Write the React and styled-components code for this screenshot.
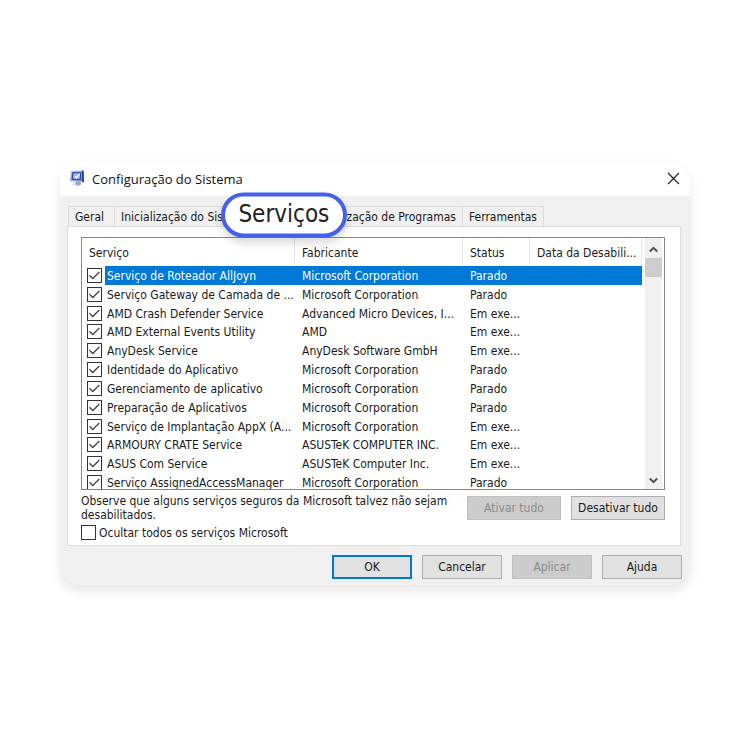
import React, { useState } from "react";
import styled, { createGlobalStyle, css } from "styled-components";

const GlobalStyle = createGlobalStyle`
  * { box-sizing: border-box; }
  body {
    margin: 0;
    background: #fff;
    color: #1a1a1a;
    font-family: "DejaVu Sans Condensed", "Noto Sans", sans-serif;
    font-size: 12px;
    line-height: 14px;
  }
  button, input { font: inherit; color: inherit; margin: 0; }
`;

const Page = styled.main`
  padding: 162px 60px 40px;
`;

const Dialog = styled.section`
  border-radius: 20px;
  background: #f0f0f0;
  box-shadow: 0 6px 12px rgba(0, 0, 0, 0.1);
`;

const TitleBar = styled.header`
  display: flex;
  align-items: center;
  height: 34px;
  padding: 0 10px 2px 9px;
  border-radius: 20px 20px 0 0;
  background: #fff;
`;

const Title = styled.h1`
  flex: 1;
  margin: 2px 0 0 7px;
  font: 400 13px/18px "Open Sans", "Noto Sans", sans-serif;
  color: #111;
`;

const CloseButton = styled.button`
  display: flex;
  padding: 0;
  border: 0;
  background: none;
`;

const Body = styled.div`
  padding: 10px 8px 6px 7px;
`;

const TabList = styled.div`
  display: flex;
  height: 20px;
  padding-left: 1px;
`;

const Tab = styled.button`
  position: relative;
  padding: 1px 6px 0;
  border: 1px solid #dcdcdc;
  border-width: 1px 1px 0 0;
  background: #f0f0f0;
  white-space: nowrap;
  &:first-child { border-left-width: 1px; padding-right: 10px; }
  ${(p) => p.$active && css`
    width: 48px;
    padding: 0;
    background: #fff;
  `}
`;

const Highlight = styled.span`
  position: absolute;
  z-index: 1;
  top: 8px;
  left: 26px;
  display: flex;
  align-items: center;
  justify-content: center;
  width: 126px;
  height: 45px;
  padding-bottom: 4px;
  transform: translate(-50%, -50%);
  border: 4px solid #4361ee;
  border-radius: 23px;
  background: #fff;
  box-shadow: 0 5px 10px rgba(0, 0, 0, 0.16);
  font-size: 24px;
  line-height: 28px;
  color: #222;
`;

const Panel = styled.div`
  margin-right: 1px;
  padding: 10px 15px 5px 13px;
  border: 1px solid #dcdcdc;
  background: #fff;
`;

const ListBox = styled.div`
  display: flex;
  height: 253px;
  overflow: hidden;
  border: 1px solid #828790;
  background: #fff;
`;

const ServiceTable = styled.table`
  flex: 1;
  width: 0;
  height: 254px;
  table-layout: fixed;
  border-collapse: separate;
  border-spacing: 0;
`;

const Column = styled.col`
  width: ${(p) => p.$width || "auto"};
`;

const HeadCell = styled.th`
  height: 28px;
  padding: 2px 0 0 7px;
  border-right: 1px solid #e5e5e5;
  font-weight: 400;
  text-align: left;
  white-space: nowrap;
`;

const Row = styled.tr`
  ${(p) => p.$selected && css`
    color: #fff;
    td:not(:first-child) { background: #0078d7; }
  `}
`;

const Cell = styled.td`
  padding: 1px 0 0 ${(p) => p.$indent || "7px"};
  white-space: nowrap;
  overflow: hidden;
`;

const TickCell = styled.td`
  padding: 0 0 0 5px;
`;

const TickBox = styled.input`
  appearance: none;
  display: block;
  flex: none;
  width: 15px;
  height: 15px;
  border: 1px solid #333;
  background: #fff;
  &:checked {
    background: #fff url("data:image/svg+xml,%3Csvg xmlns='http://www.w3.org/2000/svg' viewBox='0 0 13 13'%3E%3Cpath d='M1.500 6.300 4.800 9.500 11.300 3' fill='none' stroke='%23444' stroke-width='1.300'/%3E%3C/svg%3E");
  }
`;

const ScrollBar = styled.div`
  display: flex;
  flex-direction: column;
  align-items: center;
  width: 17px;
  margin: 0 2px 0 3px;
  background: #f0f0f0;
`;

const ScrollButton = styled.button`
  display: flex;
  align-items: center;
  justify-content: center;
  width: 17px;
  height: 20px;
  padding: 2px 0 0;
  border: 0;
  background: none;
`;

const Thumb = styled.div`
  width: 17px;
  height: 19px;
  margin-bottom: auto;
  background: #cdcdcd;
`;

const Footer = styled.div`
  display: flex;
  gap: 10px;
  padding-top: 4px;
`;

const Note = styled.p`
  flex: 1;
  margin: 0;
`;

const PushButton = styled.button`
  width: ${(p) => p.$width || "80px"};
  height: 24px;
  padding: 0;
  border: 1px solid #adadad;
  background: #e1e1e1;
  white-space: nowrap;
  ${(p) => p.$primary && css`border: 2px solid #0078d7;`}
  &:disabled { border-color: #bfbfbf; background: #ccc; color: #8b8b8b; }
`;

const FooterButtons = styled.div`
  display: flex;
  gap: 10px;
  padding-top: 2px;
`;

const HideOption = styled.label`
  display: flex;
  align-items: center;
  gap: 3px;
  margin-top: 3px;
`;

const Actions = styled.div`
  display: flex;
  justify-content: flex-end;
  gap: 10px;
  padding-top: 9px;
`;

const services = [
  ["Serviço de Roteador AllJoyn", "Microsoft Corporation", "Parado"],
  ["Serviço Gateway de Camada de ...", "Microsoft Corporation", "Parado"],
  ["AMD Crash Defender Service", "Advanced Micro Devices, I...", "Em exe..."],
  ["AMD External Events Utility", "AMD", "Em exe..."],
  ["AnyDesk Service", "AnyDesk Software GmbH", "Em exe..."],
  ["Identidade do Aplicativo", "Microsoft Corporation", "Parado"],
  ["Gerenciamento de aplicativo", "Microsoft Corporation", "Parado"],
  ["Preparação de Aplicativos", "Microsoft Corporation", "Parado"],
  ["Serviço de Implantação AppX (A...", "Microsoft Corporation", "Em exe..."],
  ["ARMOURY CRATE Service", "ASUSTeK COMPUTER INC.", "Em exe..."],
  ["ASUS Com Service", "ASUSTeK Computer Inc.", "Em exe..."],
  ["Serviço AssignedAccessManager", "Microsoft Corporation", "Parado"],
];

const MonitorIcon = () => (
  <svg width="16" height="17" viewBox="0 0 16 17" aria-hidden="true">
    <path d="M3 14 8 12.500l5 1.500-4 2.500z" fill="#cdd3dc" />
    <path d="M7 11h4.500l.5 3.500-2.500.8L6.500 14z" fill="#9aa5b8" />
    <path d="M2 1 14 .5l1 11.500L1 11.500z" fill="#a9b7dd" />
    <path d="M12.800.5 14.800 1 15 12.500l-2.200-.6z" fill="#34458c" />
    <path d="M3.200 2.200 12.300 2l-.1 8.400-9.700-.3z" fill="#2f4fb8" />
    <path d="M4.500 3.500 11 3.300l-.3 5.700-6.700-.2z" fill="#9db9f3" />
    <path d="m6 6 1.500 1.700L10.500 4" fill="none" stroke="#fff" strokeWidth="1.200" />
  </svg>
);

const Chevron = ({ down }) => (
  <svg width="9" height="7" viewBox="0 0 9 7" aria-hidden="true">
    <path d={down ? "M.8 1.500 4.500 5.200 8.200 1.500" : "M.8 5.500 4.500 1.800 8.200 5.500"} fill="none" stroke="#505050" strokeWidth="2" />
  </svg>
);

export default function App() {
  const [checked, setChecked] = useState(() => services.map(() => true));
  const [hidden, setHidden] = useState(false);
  const toggle = (i) => setChecked(checked.map((v, n) => (n === i ? !v : v)));

  return (
    <Page>
      <GlobalStyle />
      <Dialog role="dialog" aria-labelledby="title">
        <TitleBar>
          <MonitorIcon />
          <Title id="title">Configuração do Sistema</Title>
          <CloseButton aria-label="Fechar">
            <svg width="13" height="13" viewBox="0 0 13 13" aria-hidden="true">
              <path d="m1 1 11 11M12 1 1 12" stroke="#222" strokeWidth="1.200" />
            </svg>
          </CloseButton>
        </TitleBar>
        <Body>
          <TabList role="tablist">
            <Tab role="tab">Geral</Tab>
            <Tab role="tab">Inicialização do Sistema</Tab>
            <Tab role="tab" $active aria-selected="true">
              <Highlight>Serviços</Highlight>
            </Tab>
            <Tab role="tab">Inicialização de Programas</Tab>
            <Tab role="tab">Ferramentas</Tab>
          </TabList>
          <Panel role="tabpanel">
            <ListBox>
              <ServiceTable>
                <colgroup>
                  <Column $width="23px" />
                  <Column />
                  <Column $width="168px" />
                  <Column $width="67px" />
                  <Column $width="112px" />
                </colgroup>
                <thead>
                  <tr>
                    <HeadCell colSpan={2}>Serviço</HeadCell>
                    <HeadCell>Fabricante</HeadCell>
                    <HeadCell>Status</HeadCell>
                    <HeadCell>Data da Desabili...</HeadCell>
                  </tr>
                </thead>
                <tbody>
                  {services.map(([name, vendor, status], i) => (
                    <Row key={name} $selected={i === 0}>
                      <TickCell>
                        <TickBox type="checkbox" aria-label={name} checked={checked[i]} onChange={() => toggle(i)} />
                      </TickCell>
                      <Cell $indent="2px">{name}</Cell>
                      <Cell>{vendor}</Cell>
                      <Cell>{status}</Cell>
                      <Cell />
                    </Row>
                  ))}
                </tbody>
              </ServiceTable>
              <ScrollBar>
                <ScrollButton aria-label="Rolar para cima"><Chevron /></ScrollButton>
                <Thumb />
                <ScrollButton aria-label="Rolar para baixo"><Chevron down /></ScrollButton>
              </ScrollBar>
            </ListBox>
            <Footer>
              <Note>
                Observe que alguns serviços seguros da Microsoft talvez não sejam desabilitados.
              </Note>
              <FooterButtons>
                <PushButton $width="94px" disabled>Ativar tudo</PushButton>
                <PushButton $width="94px">Desativar tudo</PushButton>
              </FooterButtons>
            </Footer>
            <HideOption>
              <TickBox type="checkbox" checked={hidden} onChange={() => setHidden(!hidden)} />
              Ocultar todos os serviços Microsoft
            </HideOption>
          </Panel>
          <Actions>
            <PushButton $primary>OK</PushButton>
            <PushButton>Cancelar</PushButton>
            <PushButton disabled>Aplicar</PushButton>
            <PushButton>Ajuda</PushButton>
          </Actions>
        </Body>
      </Dialog>
    </Page>
  );
}
